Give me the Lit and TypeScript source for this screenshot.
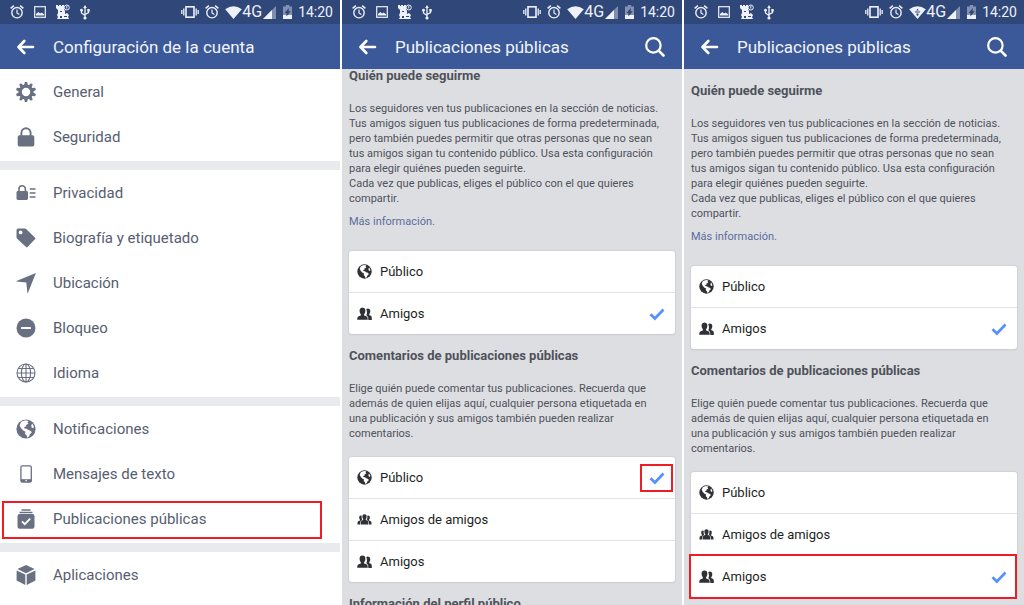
import { LitElement, html, svg, css, nothing } from "lit";
import { customElement, property } from "lit/decorators.js";
import { classMap } from "lit/directives/class-map.js";

const icons: Record<string, unknown> = {
  gear: svg`<circle cx="10" cy="10" r="5.8" fill="none" stroke="currentColor" stroke-width="3.2"/>
    <g fill="currentColor">${[0, 36, 72, 108, 144, 180, 216, 252, 288, 324].map(
      (a) => svg`<path d="M8 3.600 8.900 0h2.200l.9 3.600z" transform="rotate(${a} 10 10)"/>`
    )}</g>`,
  lock: svg`<path d="M5.400 9V5.800a4.600 4.600 0 0 1 9.200 0V9" fill="none" stroke="currentColor" stroke-width="1.900"/>
    <rect x="1.700" y="8.300" width="16.600" height="11.300" rx="1.800" fill="currentColor"/>`,
  privacy: svg`<path d="M3 8.500V6a3.200 3.200 0 0 1 6.400 0v2.500" fill="none" stroke="currentColor" stroke-width="1.600"/>
    <rect x=".5" y="8" width="11.500" height="9" rx="1.400" fill="currentColor"/>
    <path d="M13.700 6h5.800M13.700 10h5.800M13.700 14h5.800" stroke="currentColor" stroke-width="1.600"/>`,
  tag: svg`<path fill="currentColor" fill-rule="evenodd" d="M.5 2.200Q.5.600 2.100.600H8.800q.9 0 1.600.7l8.700 8.400q.7.700 0 1.400l-7.600 8q-.7.700-1.400 0L1.200 10.800Q.5 10.100.5 9.200zM4.600 2.500a1.900 1.900 0 1 0 0 3.800 1.900 1.900 0 0 0 0-3.800z"/>`,
  arrow: svg`<path fill="currentColor" d="M19.900.100 12 19.800q-.4.600-.6-.1L10.300 9.600.5 8.600q-.7-.3 0-.6z"/>`,
  block: svg`<circle cx="10" cy="10" r="9.500" fill="currentColor"/><rect x="5" y="8.900" width="10" height="2.200" rx=".6" fill="#fff"/>`,
  grid: svg`<g fill="none" stroke="currentColor" stroke-width="1.100"><circle cx="10" cy="10" r="9"/><ellipse cx="10" cy="10" rx="4.600" ry="9"/><path d="M10 1v18M1 10h18M2.500 5.500h15M2.500 14.500h15"/></g>`,
  globe: svg`<circle cx="10" cy="10" r="9.600" fill="currentColor"/>
    <path fill="#fff" d="M5.200 2.800 9.300 1.300l3.400.8-1.500 1.200 1.300.9-1.600 1.600-1.200.2.700 1.300-2.200.6.300 1.500 2 .3 1.900 1.400 2.600.8.700 1.700-1.800 1.700-.9 2.200-1.700 1.300-.8-2.500-1.600-1.500.6-2.100-2.200-1.100-2.400-2.500L3.600 6.200z"/>
    <path fill="#fff" d="m16.200 4.600 1.500 2.600-.3 2-1.600-.4-.6-2z"/>`,
  phone: svg`<rect x="4.900" y="1.800" width="10.400" height="16.400" rx="1.400" fill="none" stroke="currentColor" stroke-width="1.300"/>
    <path d="M5 15.200h10.300v2.800H5z" fill="currentColor"/><circle cx="10.100" cy="16.600" r=".8" fill="#fff"/>`,
  stack: svg`<path d="M5.500 1h9M3.500 3.500h13" stroke="currentColor" stroke-width="1.400"/>
    <path d="M1.500 7.300q0-2.200 2.200-2.200h12.600q2.200 0 2.200 2.200v10.200q0 2.200-2.200 2.200H3.700q-2.200 0-2.200-2.200z" fill="currentColor"/>
    <path d="m6 12.300 2.800 2.900 5.400-5.500" fill="none" stroke="#fff" stroke-width="1.800"/>`,
  cube: svg`<g fill="currentColor"><path d="M10 0 18.600 4 10 8.200 1.400 4z"/><path d="M.6 5.500 9.300 9.600V20L.6 15.400z"/><path d="M19.400 5.500 10.700 9.600V20l8.700-4.600z"/></g>`,
  friends: svg`<g fill="currentColor"><path d="M3.700 8.200Q2.500 2 7.300 2t3.600 6.200q-.5 1.800-1.400 2.600v1.900q3.700 1 4.300 2.200.5 1 .5 3.600H.3q0-2.700.5-3.600.6-1.200 4.300-2.200v-1.900q-.9-.8-1.400-2.600z"/>
    <path d="M12.300 4.100q1-.9 2.300-.9 3.800 0 3 5-.4 1.700-1.200 2.400v1.600q2.600.8 3 1.700.4 1 .4 4.600h-4.600q0-3.900-1.300-5-.7-.7-1.600-1.100 1-1.700 1-3.500 0-2.800-1-4.800z"/></g>`,
  group: svg`<g fill="currentColor"><path d="M7.300 7.500q-.8-4.500 2.700-4.500t2.700 4.500q-.3 1.300-1 2v1.300q2.500.6 3 1.700.4 1 .4 4.200H4.900q0-3.200.4-4.200.5-1.100 3-1.700V9.500q-.7-.7-1-2z"/>
    <path d="M6.300 5q-3.600-1-3.400 2.600.2 1.900 1.100 2.700v1Q1.500 12 1 13q-.4 1-.4 3.700h3.500q0-3.500.8-4.800.7-.9 2-1.400Q5.700 8.600 6.300 5zM13.700 5q3.600-1 3.400 2.600-.2 1.900-1.100 2.700v1q2.500.7 3 1.700.4 1 .4 3.700h-3.500q0-3.500-.8-4.800-.7-.9-2-1.400 1.200-1.900.6-5.500z"/></g>`,
};

const alarm = html`<svg width="14" height="14" viewBox="0 0 14 14"><g fill="none" stroke="currentColor"><circle cx="7" cy="7.700" r="5.200" stroke-width="1.400"/><path d="M.6 3.400 3.900.7M13.400 3.400 10.100.7" stroke-width="1.500"/><path d="M7 4.500V8l2.400 1.400" stroke-width="1.200"/></g></svg>`;

const base = css`
  :host { box-sizing: border-box; font-family: Roboto, "Noto Sans", sans-serif; }
  *, *::before, *::after { box-sizing: border-box; }
  svg { display: block; flex: none; }
  .marked { position: relative; }
  .marked::after { content: ""; position: absolute; border: 2px solid #ee1c25; pointer-events: none; }
`;

@customElement("status-bar")
class StatusBar extends LitElement {
  @property({ type: Boolean }) busy = false;

  static styles = [base, css`
    :host { display: flex; align-items: center; justify-content: space-between; height: 24px; padding: 0 7px 0 10px; background: #30477a; color: #eef1f7; }
    .side { display: flex; align-items: center; }
    .left { gap: 10px; }
    .vibrate { margin-right: 6px; }
    .wifi { margin-left: 6px; }
    .net { font-size: 16px; line-height: 20px; }
    .signal { margin-left: 1px; }
    .battery { margin: 0 6px 0 7px; }
    .time { font-size: 14px; line-height: 20px; }
  `];

  render() {
    return html`
      <div class="side left">
        ${alarm}
        <svg width="12" height="12" viewBox="0 0 12 12"><rect x=".7" y=".7" width="10.600" height="10.600" fill="none" stroke="currentColor" stroke-width="1.200"/><path d="M2 9.500V8l2.300-2 1.800 1.600 1.500-1 2.500 1.600v1.300z" fill="currentColor"/></svg>
        <svg width="14" height="16" viewBox="0 0 14 16"><path fill="currentColor" d="M0 1h2v1h1V1h2v1h1V1h2v4l1 2v3l2-1 2 2-1 2 1 2H1l1-2-1-2 1-2V6L0 4z"/><circle cx="10.800" cy="3.500" r="2.500" fill="#30477a" stroke="currentColor"/><path d="M10.800 2v2.500" stroke="currentColor"/><path d="M4 7h2v1H4zM4 12h2v2H4zM8 12h3v1H8z" fill="#30477a"/></svg>
        <svg width="10" height="15" viewBox="0 0 10 15"><path d="M5 2v11M1.500 5v3L5 10.500M8.500 5v2.500L5 9.500" fill="none" stroke="currentColor" stroke-width="1.300"/><path d="M5 0 6.800 3H3.200zM7.300 4h2.400v2.400H7.300z" fill="currentColor"/><circle cx="1.500" cy="5.200" r="1.400" fill="currentColor"/><circle cx="5" cy="13" r="1.600" fill="currentColor"/></svg>
      </div>
      <div class="side">
        <svg class="vibrate" width="18" height="12" viewBox="0 0 18 12"><rect x="5" y=".8" width="8" height="10.400" fill="none" stroke="currentColor" stroke-width="1.600"/><path d="M2.800 2.500v7M.8 4v4M15.200 2.500v7M17.200 4v4" stroke="currentColor" stroke-width="1.300"/></svg>
        ${alarm}
        <svg class="wifi" width="17" height="13" viewBox="0 0 17 13"><path fill="currentColor" d="M.2 3.200Q8.500-2.800 16.800 3.200L8.500 13z"/>${this.busy
          ? svg`<path d="M7.200 4.600 8.500 2.800 9.800 4.600zM5.500 5.500h6l-.8 1h-4.400zM7.500 7.500h2v1.500l-1 1-1-1z" fill="#30477a"/>`
          : nothing}</svg>
        <span class="net">4G</span>
        <svg class="signal" width="13" height="13" viewBox="0 0 13 13"><path fill="#7f8dae" d="M13 0v13H0z"/><path fill="currentColor" d="M9 4v9H0z"/></svg>
        <svg class="battery" width="9" height="14" viewBox="0 0 9 14"><path fill="#8391b1" d="M2.800 0h3.400v1.400H9V10H0V1.400h2.800z"/><path fill="currentColor" d="M0 10h9v4H0z"/><path fill="#30477a" d="M1.600 8 5.700 3v3.200h2L3.400 11.500V8z"/></svg>
        <span class="time">14:20</span>
      </div>`;
  }
}

@customElement("title-bar")
class TitleBar extends LitElement {
  @property() heading = "";
  @property({ type: Boolean }) search = false;

  static styles = [base, css`
    :host { display: flex; align-items: center; height: 45px; padding: 0 17px; background: #3b5998; color: #fff; }
    button { display: block; padding: 0; border: 0; background: none; color: inherit; }
    h1 { flex: 1; margin: 0 0 0 18px; font-size: 17px; line-height: 24px; font-weight: 400; color: #f2f4f9; }
  `];

  render() {
    return html`
      <button aria-label="Atrás"><svg width="18" height="16" viewBox="0 0 18 16"><path d="M7.300 2 1.500 8l5.800 6M2 8h14" fill="none" stroke="currentColor" stroke-width="2.600" stroke-linecap="round" stroke-linejoin="round"/></svg></button>
      <h1>${this.heading}</h1>
      ${this.search
        ? html`<button aria-label="Buscar"><svg width="20" height="20" viewBox="0 0 20 20"><circle cx="8.400" cy="8.400" r="7.200" fill="none" stroke="currentColor" stroke-width="2.200"/><path d="m13.600 13.600 4.900 4.900" stroke="currentColor" stroke-width="2.600" stroke-linecap="round"/></svg></button>`
        : nothing}`;
  }
}

const sections = [
  [["gear", "General"], ["lock", "Seguridad"]],
  [["privacy", "Privacidad"], ["tag", "Biografía y etiquetado"], ["arrow", "Ubicación"], ["block", "Bloqueo"], ["grid", "Idioma"]],
  [["globe", "Notificaciones"], ["phone", "Mensajes de texto"], ["stack", "Publicaciones públicas"]],
  [["cube", "Aplicaciones"]],
];

@customElement("settings-menu")
class SettingsMenu extends LitElement {
  @property() marked = "";

  static styles = [base, css`
    :host { display: block; background: #fff; }
    ul { margin: 0; padding: 0 0 2px; list-style: none; }
    ul + ul { border-top: 9px solid #e9eaee; }
    a { display: flex; align-items: center; gap: 17px; height: 45px; padding: 0 16px; color: #565e70; font-size: 15px; line-height: 20px; text-decoration: none; }
    svg { color: #697082; }
    .marked::after { inset: 5px 18px 2px 2px; }
  `];

  render() {
    return html`<nav>${sections.map((rows) => html`<ul>${rows.map(([icon, label]) => html`
      <li class=${classMap({ marked: label === this.marked })}><a href="#"><svg width="20" height="20" viewBox="0 0 20 20">${icons[icon]}</svg>${label}</a></li>`)}</ul>`)}</nav>`;
  }
}

@customElement("audience-picker")
class AudiencePicker extends LitElement {
  @property() label = "";
  @property({ type: Array }) options: string[] = [];
  @property() value = "";
  @property() mark = "";

  static styles = [base, css`
    :host { display: block; }
    fieldset { margin: 0; padding: 0; border: 0; border-radius: 3px; background: #fff; box-shadow: 0 0 1px 1px #d0d2d7, 0 1px 1px #b5b7bc; }
    label { display: flex; align-items: center; gap: 8px; height: 41px; padding: 0 10px 0 8px; font-size: 13px; line-height: 20px; color: #1d1f23; }
    .option + .option { border-top: 1px solid #e2e3e6; }
    .name { flex: 1; }
    input { appearance: none; width: 0; height: 0; margin: 0; }
    .icon { color: #2f3135; }
    .row.marked::after { inset: -2px 0 -2px -2px; }
    .tick.marked::after { inset: -7px -8px -7px -9px; }
  `];

  render() {
    const kinds: Record<string, string> = { "Público": "globe", "Amigos": "friends", "Amigos de amigos": "group" };
    return html`<fieldset aria-label=${this.label}>${this.options.map((name) => {
      const on = name === this.value;
      return html`<div class="option"><label class=${classMap({ row: true, marked: on && this.mark === "row" })}>
        <svg class="icon" width="15" height="15" viewBox="0 0 20 20">${icons[kinds[name]]}</svg>
        <span class="name">${name}</span>
        <input type="radio" name="audience" .checked=${on}>
        ${on ? html`<span class=${classMap({ tick: true, marked: this.mark === "tick" })}><svg width="16" height="14" viewBox="0 0 16 14"><path d="m1.500 7.300 4.400 4.200 8.600-9" fill="none" stroke="#5890ff" stroke-width="2.700"/></svg></span>` : nothing}
      </label></div>`;
    })}</fieldset>`;
  }
}

@customElement("public-posts")
class PublicPosts extends LitElement {
  @property({ type: Number }) scrolled = 0;
  @property() comments = "";
  @property() mark = "";

  static styles = [base, css`
    :host { display: block; overflow-y: auto; scrollbar-width: none; padding: 13px 7px; background: #dddee2; color: #4e525a; }
    h2 { margin: 13px 0 16px; font-size: 13px; line-height: 18px; font-weight: 700; }
    h2:first-child { margin-top: 0; }
    p { margin: 0; padding-right: 12px; font-size: 11px; line-height: 15px; }
    .link { margin: 8px 0 22px; }
    .link a { color: #5a6d9b; text-decoration: none; }
    .comments { margin-bottom: 16px; }
  `];

  updated() {
    requestAnimationFrame(() => (this.scrollTop = this.scrolled));
  }

  render() {
    return html`
      <h2>Quién puede seguirme</h2>
      <p>Los seguidores ven tus publicaciones en la sección de noticias. Tus amigos siguen tus publicaciones de forma predeterminada, pero también puedes permitir que otras personas que no sean tus amigos sigan tu contenido público. Usa esta configuración para elegir quiénes pueden seguirte.<br>Cada vez que publicas, eliges el público con el que quieres compartir.</p>
      <p class="link"><a href="#">Más información.</a></p>
      <audience-picker label="Quién puede seguirme" .options=${["Público", "Amigos"]} value="Amigos"></audience-picker>
      <h2>Comentarios de publicaciones públicas</h2>
      <p class="comments">Elige quién puede comentar tus publicaciones. Recuerda que además de quien elijas aquí, cualquier persona etiquetada en una publicación y sus amigos también pueden realizar comentarios.</p>
      <audience-picker label="Comentarios de publicaciones públicas" .options=${["Público", "Amigos de amigos", "Amigos"]} value=${this.comments} mark=${this.mark}></audience-picker>
      <h2>Información del perfil público</h2>`;
  }
}

@customElement("app-root")
class AppRoot extends LitElement {
  static styles = [base, css`
    :host { display: grid; grid-template-columns: repeat(3, minmax(0, 1fr)); gap: 2px; height: 100vh; overflow: hidden; background: #fff; }
    .screen { display: flex; flex-direction: column; min-height: 0; overflow: hidden; }
    status-bar, title-bar { flex: none; }
    .body { flex: 1; min-height: 0; }
  `];

  render() {
    return html`
      <section class="screen">
        <status-bar></status-bar>
        <title-bar heading="Configuración de la cuenta"></title-bar>
        <settings-menu class="body" marked="Publicaciones públicas"></settings-menu>
      </section>
      <section class="screen">
        <status-bar></status-bar>
        <title-bar heading="Publicaciones públicas" search></title-bar>
        <public-posts class="body" scrolled="15" comments="Público" mark="tick"></public-posts>
      </section>
      <section class="screen">
        <status-bar busy></status-bar>
        <title-bar heading="Publicaciones públicas" search></title-bar>
        <public-posts class="body" comments="Amigos" mark="row"></public-posts>
      </section>`;
  }
}
